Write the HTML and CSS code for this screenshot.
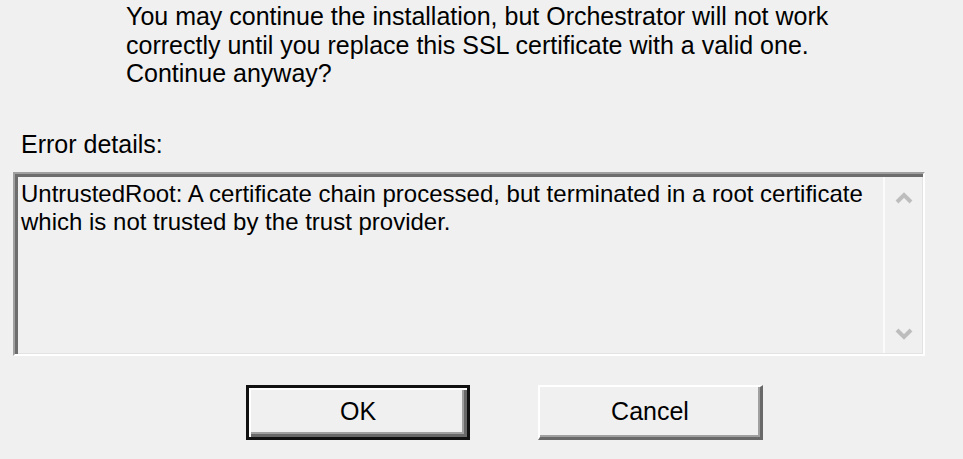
FILE: index.html
```html
<!DOCTYPE html>
<html>
<head>
<meta charset="utf-8">
<link rel="stylesheet" href="styles.css">
</head>
<body>
<div class="dialog">
  <p class="message">You may continue the installation, but Orchestrator will not work<br>correctly until you replace this SSL certificate with a valid one.<br>Continue anyway?</p>
  <div class="label">Error details:</div>
  <div class="textbox">
    <div class="details">UntrustedRoot: A certificate chain processed, but terminated in a root certificate<br>which is not trusted by the trust provider.</div>
    <div class="scrollbar">
      <svg class="arrow" width="20" height="14" viewBox="0 0 20 14"><path d="M3 11 L10 4 L17 11" fill="none" stroke="#bdbdbd" stroke-width="4"/></svg>
      <svg class="arrow" width="20" height="14" viewBox="0 0 20 14"><path d="M3 3 L10 10 L17 3" fill="none" stroke="#bdbdbd" stroke-width="4"/></svg>
    </div>
  </div>
  <div class="buttons">
    <div class="btn default">OK</div>
    <div class="btn">Cancel</div>
  </div>
</div>
</body>
</html>
```
FILE: styles.css
```css
html, body {
  margin: 0;
  padding: 0;
  background: #f0f0f0;
}
body {
  width: 963px;
  height: 459px;
  overflow: hidden;
  font-family: "Liberation Sans", Arial, sans-serif;
  font-size: 25px;
  color: #000;
}
.dialog {
  display: flex;
  flex-direction: column;
}
.message {
  margin: 2px 0 0 126px;
  line-height: 28.5px;
}
.label {
  margin: 42.5px 0 0 21px;
  line-height: 28.5px;
}
.textbox {
  margin: 13.5px 0 0 13px;
  width: 912px;
  height: 184px;
  box-sizing: border-box;
  border: 2px solid;
  border-color: #a0a0a0 #ffffff #ffffff #a0a0a0;
  box-shadow: inset 3px 3px 0 #6d6d6d, inset -1px -1px 0 #e3e3e3;
  display: flex;
}
.details {
  flex: 1;
  padding: 5.5px 0 0 6px;
  font-size: 24px;
  line-height: 28.5px;
}
.scrollbar {
  width: 37px;
  margin: 3px 1px 1px 0;
  border-left: 2px solid #fbfbfb;
  display: flex;
  flex-direction: column;
  justify-content: space-between;
  align-items: center;
  padding: 14px 0 12px;
}
.buttons {
  display: flex;
  gap: 68px;
  margin: 29px 0 0 246px;
}
.btn {
  width: 225px;
  height: 55px;
  box-sizing: border-box;
  display: flex;
  align-items: center;
  justify-content: center;
  border-top: 2px solid #ffffff;
  border-left: 2px solid #ffffff;
  border-right: 3px solid #696969;
  border-bottom: 3px solid #696969;
  box-shadow: inset -2px -2px 0 #a0a0a0;
  background: #f0f0f0;
  padding-bottom: 2px;
}
.btn.default {
  width: 224px;
  border: 3px solid #111;
  box-shadow: inset 2px 2px 0 #ffffff, inset -3px -3px 0 #696969, inset -5px -5px 0 #a0a0a0;
}
```
